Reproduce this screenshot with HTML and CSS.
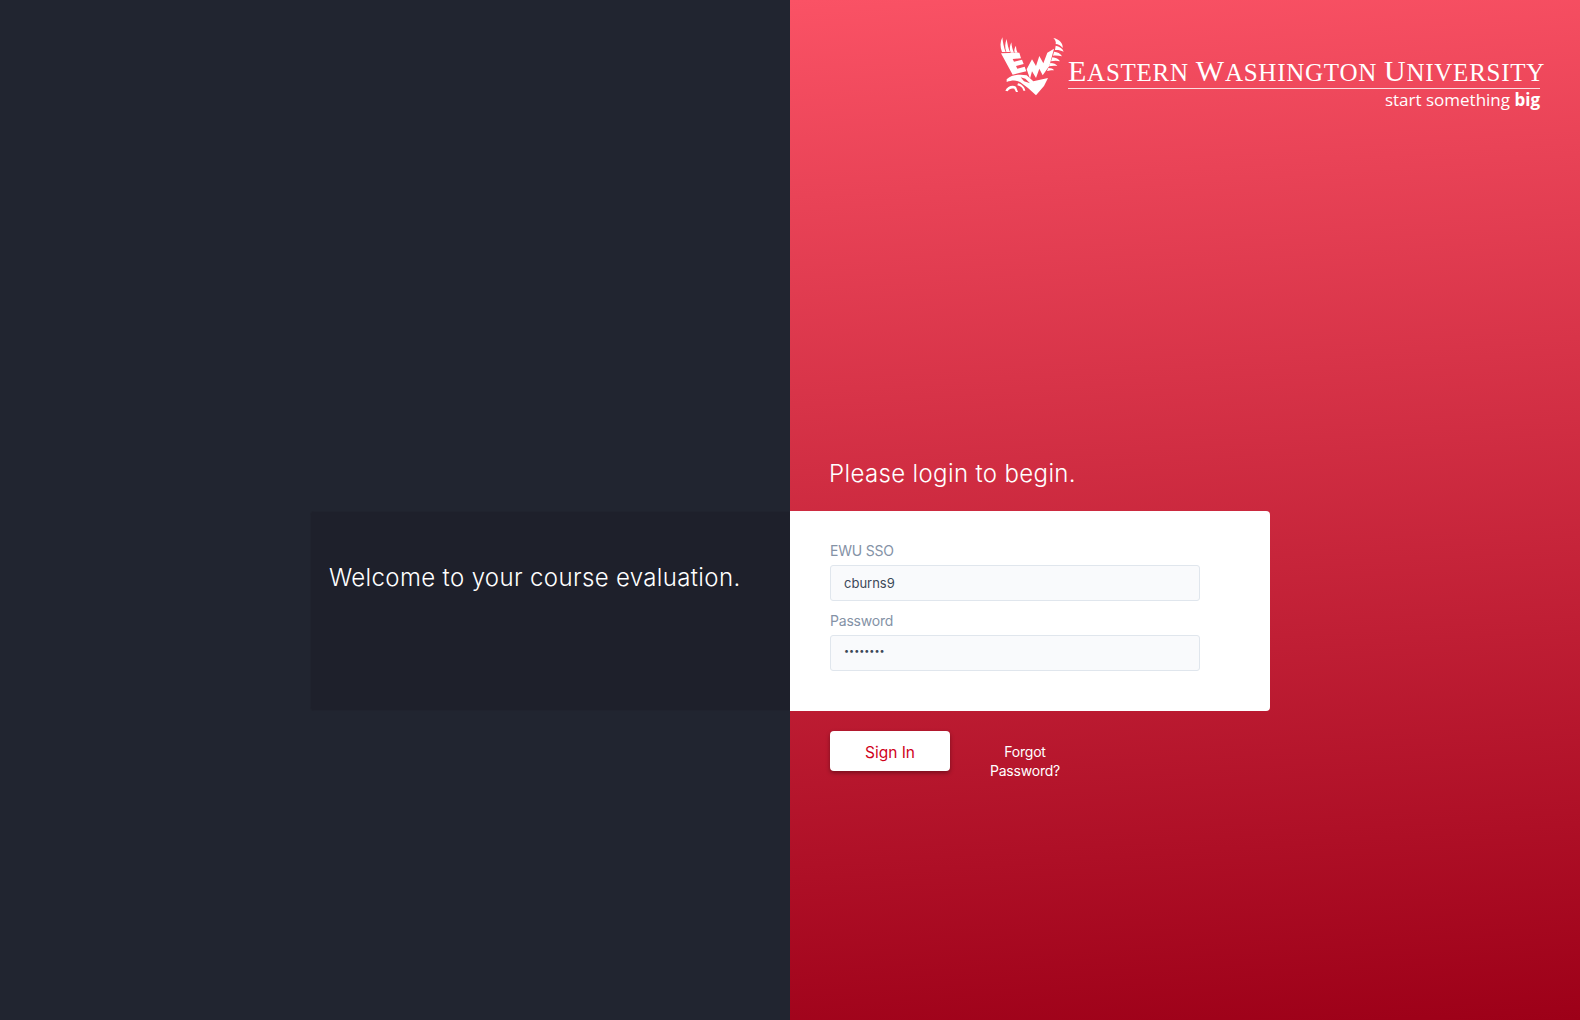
FILE: index.html
```html
<!DOCTYPE html>
<html lang="en">
<head>
    <meta charset="UTF-8">
    <meta name="viewport" content="width=device-width, initial-scale=1.0">
    <title>Course Evaluation Login</title>
    <link rel="stylesheet" href="styles.css">
</head>
<body>
    <div class="split">
        <div class="side-dark">
            <div class="welcome">
                <h2>Welcome to your course evaluation.</h2>
            </div>
        </div>

        <div class="side-red">
            <header class="brand">
                <svg class="eagle" viewBox="0 0 210 192" aria-hidden="true">
                    <g fill="#fff" fill-rule="evenodd">
                        <!-- left wing feathers -->
                        <path d="M6 48 C0 34 0 18 7 4 C9 20 11 34 17 48 Z"/>
                        <path d="M19 48 C14 34 15 22 20 9 C22 24 25 36 30 48 Z"/>
                        <path d="M32 50 C28 40 29 30 34 19 C35 32 38 42 42 50 Z"/>
                        <path d="M44 50 C42 42 43 36 48 29 C48 38 50 44 53 50 Z"/>
                        <!-- E block -->
                        <path d="M3 52 L58 50 L63 67 L38 69 L42 77 L66 71 L71 84 L48 90 L52 98 L74 92 L79 106 L38 116 Z"/>
                        <!-- W block -->
                        <path d="M80 100 L96 70 L108 90 L118 60 L130 82 L142 50 L162 38 L148 90 L128 118 L118 98 L108 126 L96 106 L90 128 Z"/>
                        <!-- right wing feathers -->
                        <path d="M160 6 C178 10 190 22 188 36 C182 28 174 24 167 24 C169 18 165 11 160 6 Z"/>
                        <path d="M167 29 C178 31 187 36 191 47 C182 43 174 41 165 42 Z"/>
                        <path d="M162 47 C172 48 182 52 186 61 C176 59 168 57 159 59 Z"/>
                        <path d="M157 64 C168 65 176 69 180 76 C172 74 162 74 153 76 Z"/>
                        <path d="M151 81 C161 81 168 84 172 90 C164 89 156 89 147 91 Z"/>
                        <path d="M145 96 C153 96 160 98 162 103 C155 102 150 103 141 105 Z"/>
                        <!-- head, body and tail -->
                        <path d="M20 130 C34 116 60 114 80 118 L100 136 L144 126 L132 150 L108 178 L84 156 L60 138 C48 132 36 132 20 138 Z M62 124 L76 128 L90 142 L72 136 Z"/>
                        <!-- talons -->
                        <path d="M16 164 C22 150 38 146 48 152 L54 168 L48 168 L43 158 C34 156 28 158 23 166 Z"/>
                        <path d="M54 142 C64 144 74 152 76 164 L70 164 C68 154 62 150 52 148 Z"/>
                    </g>
                </svg>
                <div class="wordmark">
                    <div class="wordmark-name"><span>E</span>astern <span>W</span>ashington <span>U</span>niversity</div>
                    <div class="wordmark-tag">start something <b>big</b></div>
                </div>
            </header>

            <h2 class="begin">Please login to begin.</h2>

            <form class="login-card">
                <label for="sso">EWU SSO</label>
                <input id="sso" type="text" value="cburns9">
                <label for="password">Password</label>
                <input id="password" type="password" value="password">
            </form>

            <div class="actions">
                <button type="button" class="signin">Sign In</button>
                <a href="#" class="forgot">Forgot Password?</a>
            </div>
        </div>
    </div>
</body>
</html>
```

FILE: styles.css
```css
* {
    box-sizing: border-box;
}

html, body {
    height: 100%;
}

body {
    margin: 0;
    font-family: Inter, "Liberation Sans", sans-serif;
    background-color: #212530;
}

h2 {
    margin: 0;
    font-weight: 300;
    font-size: 24px;
    line-height: 32px;
    letter-spacing: 0.36px;
    color: #fff;
}

.split {
    display: flex;
    height: 100%;
    overflow: hidden;
}

.side-dark {
    flex: 0 0 790px;
    padding: 511px 0 0 310px;
    background-color: #212530;
}

.welcome {
    height: 200px;
    padding: 50px 18px 0;
    background-color: #1e202b;
    border: 1px solid #20232e;
    border-right: none;
    border-radius: 4px 0 0 4px;
}

.welcome h2 {
    white-space: nowrap;
}

.side-red {
    flex: 1;
    display: flex;
    flex-direction: column;
    background-image: linear-gradient(176deg, #fa5265, #9d0018);
}

.brand {
    display: flex;
    justify-content: flex-end;
    align-items: flex-start;
    height: 120px;
    padding: 36px 36px 0 0;
    margin-bottom: 338px;
}

.eagle {
    width: 70px;
    height: 64px;
    margin-right: -2px;
}

.wordmark {
    width: 476px;
    padding-top: 20px;
    color: #fff;
}

.wordmark-name {
    font-family: "Liberation Serif", serif;
    text-transform: uppercase;
    font-size: 25px;
    line-height: 30px;
    white-space: nowrap;
    letter-spacing: 0.75px;
    border-bottom: 1px solid rgba(255, 255, 255, 0.8);
    margin-right: 4px;
}

.wordmark-name span {
    font-size: 30px;
}

.wordmark-tag {
    font-family: "Open Sans", sans-serif;
    font-size: 17px;
    line-height: 22px;
    text-align: right;
    margin-right: 4px;
}

.wordmark-tag b {
    font-weight: 700;
}

.begin {
    padding-left: 39px;
    margin-bottom: 21px;
}

.login-card {
    display: flex;
    flex-direction: column;
    width: 480px;
    height: 200px;
    padding: 32px 70px 0 40px;
    background-color: #fff;
    border-radius: 0 4px 4px 0;
}

.login-card label {
    font-size: 14px;
    line-height: 16px;
    letter-spacing: -0.2px;
    margin-bottom: 6px;
    color: #8492a6;
}

.login-card input {
    height: 36px;
    padding: 0 13px;
    margin-bottom: 12px;
    font-family: inherit;
    font-size: 13px;
    color: #3c4858;
    background-color: #f9fafc;
    border: 1px solid #e0e6ed;
    border-radius: 3px;
}

.login-card input[type="password"] {
    font-size: 9px;
    padding-bottom: 5px;
}

.actions {
    display: flex;
    align-items: flex-start;
    padding: 20px 0 0 40px;
}

.signin {
    width: 120px;
    height: 40px;
    padding-top: 3px;
    font-family: inherit;
    font-size: 15.5px;
    color: #d0021b;
    background-color: #fff;
    border: none;
    border-radius: 4px;
    box-shadow: 0 2px 4px rgba(0, 0, 0, 0.35);
    cursor: pointer;
}

.forgot {
    width: 90px;
    margin: 11px 0 0 30px;
    font-size: 14px;
    line-height: 19px;
    letter-spacing: -0.2px;
    text-align: center;
    text-decoration: none;
    color: #fff;
}
```
